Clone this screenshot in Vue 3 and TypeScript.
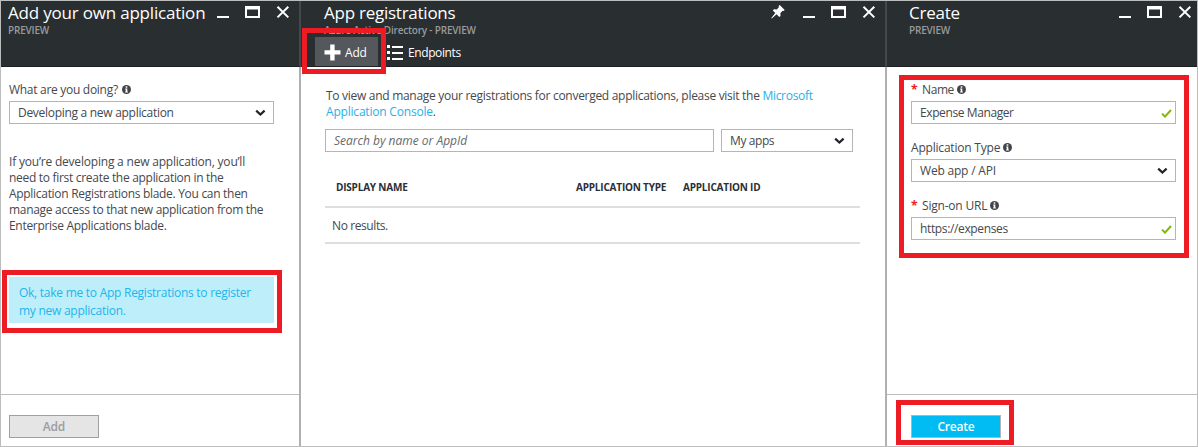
<script setup lang="ts">
interface FormField {
  label: string
  value: string
  required: boolean
  kind: 'text' | 'select'
  cls: string
}

const fields: FormField[] = [
  { label: 'Name', value: 'Expense Manager', required: true, kind: 'text', cls: 'tight' },
  { label: 'Application Type', value: 'Web app / API', required: false, kind: 'select', cls: 'normal' },
  { label: 'Sign-on URL', value: 'https://expenses', required: true, kind: 'text', cls: 'url' },
]
</script>

<template>
  <div class="portal">
    <section class="blade left">
      <header class="head">
        <div class="titles">
          <h1 class="wide">Add your own application</h1>
          <p>PREVIEW</p>
        </div>
        <svg class="win" width="74" height="14" viewBox="0 0 74 14">
          <path d="M1 11h12v2H1z" fill="#fff" />
          <path d="M29 1h15v12H29zM31 4.5v6.5h11V4.5z" fill="#fff" fill-rule="evenodd" />
          <path d="M61.5 1.8l10.8 10.6M72.3 1.8L61.5 12.4" stroke="#fff" stroke-width="2" />
        </svg>
      </header>
      <main class="body">
        <div class="label"><span class="snug">What are you doing?</span>
          <svg class="info" width="9" height="9" viewBox="0 0 9 9"><circle cx="4.5" cy="4.5" r="4.5" fill="#41454a" /><path d="M3.7 1.3h1.6v1.4H3.7zM3.2 3.5h2.1v3h.6v.9H3.1v-.9h.6V4.4h-.5z" fill="#fff" /></svg>
        </div>
        <div class="box"><span class="snug">Developing a new application</span>
          <svg class="chev" width="11" height="8" viewBox="0 0 11 8"><path d="M1.2 1.6l4.2 4 4.2-4" fill="none" stroke="#20242a" stroke-width="2.2" /></svg>
        </div>
        <p class="intro">
          <span class="first">If you’re developing a new application, you’ll</span><br />need to first create the application in the<br />Application Registrations blade. You can then<br />manage access to that new application from the<br />Enterprise Applications blade.
        </p>
        <a class="callout">Ok, take me to App Registrations to register<br />my new application.</a>
      </main>
      <footer class="foot"><button class="btn disabled">Add</button></footer>
      <i class="mark m-callout"></i>
    </section>

    <section class="blade mid">
      <header class="head">
        <div class="titles">
          <h1>App registrations</h1>
          <p>Azure Active Directory - PREVIEW</p>
          <nav class="tools">
            <span class="tool active">
              <svg width="17" height="17" viewBox="0 0 17 17"><path d="M6.2 0.5h4.4v5.8H16.5v4.3h-5.9v5.9H6.2v-5.9H0.5V6.3h5.7z" fill="#fff" /></svg>
              <b>Add</b>
            </span>
            <span class="tool second">
              <svg width="16" height="16" viewBox="0 0 16 16"><path d="M0 0h3v3H0zM0 6h3v3H0zM0 12h3v3H0zM5 1h11v2H5zM5 7h11v2H5zM5 13h11v2H5z" fill="#fff" /></svg>
              <b class="tighter">Endpoints</b>
            </span>
          </nav>
        </div>
        <svg class="pin" width="14" height="14" viewBox="0 0 14 14"><path d="M8.7 0l5 5-1 1-1-.3-2.3 2.4.1 2.8-1.2 1.2-2.7-2.8L0.8 13.5l-.5-.5 4-5L1.8 5.4 3 4.2l2.8.2L8 2 7.6 1z" fill="#fff" /></svg>
        <svg class="win" width="74" height="14" viewBox="0 0 74 14">
          <path d="M1 11h12v2H1z" fill="#fff" />
          <path d="M29 1h15v12H29zM31 4.5v6.5h11V4.5z" fill="#fff" fill-rule="evenodd" />
          <path d="M61.5 1.8l10.8 10.6M72.3 1.8L61.5 12.4" stroke="#fff" stroke-width="2" />
        </svg>
      </header>
      <main class="body">
        <p class="note"><span class="snug">To view and manage your registrations for converged applications, please visit the <a>Microsoft</a></span><br /><a>Application Console</a>.</p>
        <div class="filters">
          <div class="box search"><em>Search by name or AppId</em></div>
          <div class="box scope"><span class="tighter">My apps</span>
            <svg class="chev" width="11" height="8" viewBox="0 0 11 8"><path d="M1.2 1.6l4.2 4 4.2-4" fill="none" stroke="#20242a" stroke-width="2.2" /></svg>
          </div>
        </div>
        <div class="thead"><span>DISPLAY NAME</span><span>APPLICATION TYPE</span><span>APPLICATION ID</span></div>
        <div class="empty tighter">No results.</div>
      </main>
      <i class="mark m-add"></i>
    </section>

    <section class="blade right">
      <header class="head">
        <div class="titles">
          <h1>Create</h1>
          <p>PREVIEW</p>
        </div>
        <svg class="win" width="74" height="14" viewBox="0 0 74 14">
          <path d="M1 11h12v2H1z" fill="#fff" />
          <path d="M29 1h15v12H29zM31 4.5v6.5h11V4.5z" fill="#fff" fill-rule="evenodd" />
          <path d="M61.5 1.8l10.8 10.6M72.3 1.8L61.5 12.4" stroke="#fff" stroke-width="2" />
        </svg>
      </header>
      <main class="body">
        <div v-for="f in fields" :key="f.label" class="field" :class="f.cls">
          <div class="label">
            <span v-if="f.required" class="star">*</span><span class="lt">{{ f.label }}</span>
            <svg class="info" width="9" height="9" viewBox="0 0 9 9"><circle cx="4.5" cy="4.5" r="4.5" fill="#41454a" /><path d="M3.7 1.3h1.6v1.4H3.7zM3.2 3.5h2.1v3h.6v.9H3.1v-.9h.6V4.4h-.5z" fill="#fff" /></svg>
          </div>
          <div class="box" :class="f.kind"><span class="val">{{ f.value }}</span>
            <svg v-if="f.kind === 'select'" class="chev" width="11" height="8" viewBox="0 0 11 8"><path d="M1.2 1.6l4.2 4 4.2-4" fill="none" stroke="#20242a" stroke-width="2.2" /></svg>
            <svg v-else class="tick" width="11" height="9" viewBox="0 0 11 9"><path d="M1 4.6l3 3L10 1" fill="none" stroke="#7fba00" stroke-width="2" /></svg>
          </div>
        </div>
      </main>
      <footer class="foot"><button class="btn primary">Create</button></footer>
      <i class="mark m-form"></i>
      <i class="mark m-create"></i>
    </section>
  </div>
</template>

<style>
body { margin: 0; background: #fff; }
</style>

<style scoped>
* { box-sizing: border-box; }
.portal {
  display: flex;
  width: 1198px;
  height: 447px;
  border: 1px solid #bcbebe;
  font: 12px/16px "Open Sans", "Noto Sans", sans-serif;
  letter-spacing: -0.2px;
  color: #45484c;
  overflow: hidden;
  white-space: nowrap;
}
.blade { position: relative; display: flex; flex: none; flex-direction: column; height: 445px; background: #fff; }
.left { width: 300px; border-right: 2px solid #b0b0b0; }
.mid { width: 586px; border-right: 2px solid #b0b0b0; }
.right { width: 310px; }
.head { display: flex; height: 66px; flex: none; background: #292e31; border-bottom: 1px solid #1e2125; margin-right: -2px; border-right: 2px solid #43484c; }
.right .head { margin-right: 0; border-right: 0; }
.titles { flex: 1; padding: 0 0 0 7px; }
.mid .titles { padding-left: 23px; }
.right .titles { padding-left: 22px; }
h1 { margin: 0; height: 23px; font-size: 17px; line-height: 23px; font-weight: 400; color: #fff; letter-spacing: -0.25px; }
.wide { letter-spacing: -0.2px; }
.head p { margin: 0; font-size: 10px; line-height: 13px; font-weight: 600; color: #989b9d; }
.win { flex: none; margin: 4px 9px 0 0; }
.right .win { margin-right: 5px; }
.pin { flex: none; margin: 4px 17px 0 0; }
.tools { display: flex; margin-left: -9px; height: 29px; color: #fff; }
.tool { display: flex; align-items: center; height: 29px; }
.tool svg { margin-top: 2px; }
.tool b { font-weight: 400; font-size: 12px; padding-top: 3px; }
.active { width: 63px; padding-left: 9px; background: #54575b; }
.active b { margin-left: 4px; }
.second { padding-left: 9px; }
.second b { margin-left: 5px; }
.snug { letter-spacing: -0.29px; }
.tighter, .tight .val, .tight .lt { letter-spacing: -0.4px; }
.url .val { letter-spacing: -0.36px; }
.body { flex: 1; padding: 15px 8px 0; }
.label { display: flex; align-items: center; height: 16px; }
.info { margin: 0 0 1px 4px; }
.right .info { margin-left: 3px; }
.box { display: flex; align-items: center; justify-content: space-between; width: 265px; height: 23px; margin-top: 3px; padding: 1px 7px 0 8px; border: 1px solid #b4b5b6; background: #fff; }
.box.text { padding-right: 3px; }
.intro { margin: 30px 0 0; height: 80px; letter-spacing: -0.3px; }
.first { letter-spacing: -0.2px; }
.callout { display: block; width: 265px; height: 46px; margin-top: 43px; padding: 7px 10px 0; line-height: 18px; background: #bfeefb; color: #21b5ea; letter-spacing: -0.26px; }
.foot { flex: none; height: 52px; border-top: 1px solid #bdbdbd; padding: 20px 8px 0; }
.btn { display: block; width: 90px; height: 23px; padding: 0; border: 1px solid #a0a0a0; background: #e5e5e5; color: #9b9da0; font: 600 12px/19px "Open Sans", sans-serif; letter-spacing: -0.2px; }
.primary { background: #00bcf2; border-color: #b0b6b8; color: #fff; }
.mid .body { padding: 21px 24px 0; }
.note { margin: 0; padding-left: 1px; height: 32px; }
.note a { color: #1fb1e9; }
.filters { display: flex; gap: 7px; margin-top: 9px; }
.filters .box { margin: 0; }
.filters .search { width: 389px; padding-left: 8px; color: #66696c; letter-spacing: 0; }
.filters .scope { width: 132px; }
.thead { display: grid; grid-template-columns: 240px 107px 1fr; width: 535px; height: 56px; padding: 28px 0 0 11px; border-bottom: 2px solid #dedede; font-size: 10px; font-weight: 700; line-height: 14px; color: #2a2e38; }
.empty { width: 535px; height: 36px; padding: 10px 0 0 7px; border-bottom: 2px solid #dedede; }
.right .body { padding-left: 24px; }
.field { height: 58px; }
.star { width: 11px; color: #ed1c24; font-weight: 700; }
.right .foot { padding-left: 24px; }
.mark { position: absolute; border: 5px solid #ed1c24; }
.m-callout { left: 1px; top: 269px; width: 280px; height: 63px; }
.m-add { left: 1px; top: 27px; width: 84px; height: 46px; }
.m-form { left: 12px; top: 74px; width: 290px; height: 183px; }
.m-create { left: 9px; top: 399px; width: 118px; height: 45px; }
</style>
